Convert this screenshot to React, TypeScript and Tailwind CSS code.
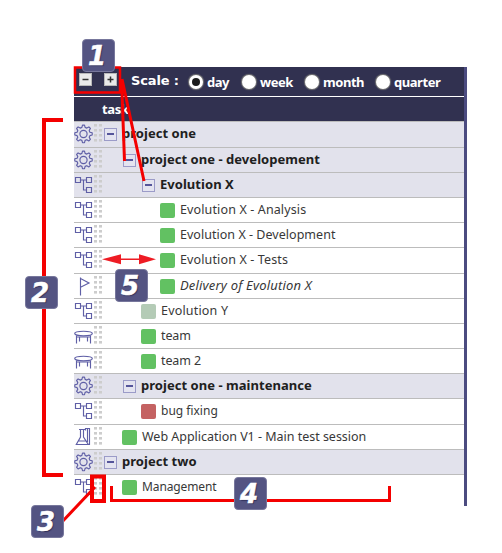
import React from "react";

type IconKind = "gear" | "tree" | "flag" | "table" | "flask";

type Row = {
  icon: IconKind;
  label: string;
  pad: string;
  tall?: boolean;
  group?: boolean;
  color?: string;
  text: string;
};

const groupText = "-mt-[2px] text-[13px] font-bold tracking-[0.04px] text-[#202020]";

const rows: Row[] = [
  { icon: "gear", label: "project one", pad: "pl-0", group: true, tall: true, text: groupText },
  { icon: "gear", label: "project one - developement", pad: "pl-[19px]", group: true, text: groupText },
  { icon: "tree", label: "Evolution X", pad: "pl-[38px]", group: true, text: groupText },
  { icon: "tree", label: "Evolution X - Analysis", pad: "pl-[57px]", color: "bg-[#62c162]", text: "text-[#383838] text-[12.5px] tracking-[0.13px]" },
  { icon: "tree", label: "Evolution X - Development", pad: "pl-[57px]", color: "bg-[#62c162]", text: "text-[#383838] text-[12.5px] tracking-[0.03px]" },
  { icon: "tree", label: "Evolution X - Tests", pad: "pl-[57px]", color: "bg-[#62c162]", tall: true, text: "text-[#383838] text-[12.5px] tracking-[0.13px]" },
  { icon: "flag", label: "Delivery of Evolution X", pad: "pl-[57px]", color: "bg-[#62c162]", text: "-mt-[2px] text-[#383838] text-[13px] italic tracking-[0.18px]" },
  { icon: "tree", label: "Evolution Y", pad: "pl-[38px]", color: "bg-[#b4cbb6]", text: "text-[#383838] text-[12.5px] tracking-[0.18px]" },
  { icon: "table", label: "team", pad: "pl-[38px]", color: "bg-[#62c162]", text: "text-[#383838] text-[12.5px] tracking-[-0.1px]" },
  { icon: "table", label: "team 2", pad: "pl-[38px]", color: "bg-[#62c162]", text: "text-[#383838] text-[12.5px] tracking-[-0.1px]" },
  { icon: "gear", label: "project one - maintenance", pad: "pl-[19px]", group: true, text: groupText },
  { icon: "tree", label: "bug fixing", pad: "pl-[38px]", color: "bg-[#c46262]", tall: true, text: "text-[#383838] text-[12px]" },
  { icon: "flask", label: "Web Application V1 - Main test session", pad: "pl-[19px]", color: "bg-[#62c162]", text: "text-[#383838] text-[12.5px] tracking-[-0.02px]" },
  { icon: "gear", label: "project two", pad: "pl-0", group: true, text: groupText },
  { icon: "tree", label: "Management", pad: "pl-[19px]", color: "bg-[#62c162]", text: "text-[#383838] text-[12px] tracking-[-0.12px]" },
];

function RowIcon({ kind }: { kind: IconKind }) {
  return (
    <svg className="-mt-[1px] size-5 shrink-0" viewBox="0 0 20 20" fill="none" stroke="#5f5fa6" strokeWidth="1.15">
      {kind === "gear" && (
        <g transform="translate(0 -0.5)">
          <circle cx="9.5" cy="10.500" r="3.6" />
          <path
            strokeLinejoin="round"
            d="M7.900 3.900 8.500 1.600h2l.600 2.300 1.700.7 2.100-1.200 1.500 1.500-1.200 2.100.7 1.700 2.300.6v2.200l-2.300.6-.7 1.700 1.200 2.100-1.500 1.500-2.100-1.200-1.700.7-.600 2.300h-2l-.600-2.300-1.700-.7-2.100 1.200L2.600 15.900l1.200-2.100-.7-1.700-2.300-.6V9.300l2.300-.6.7-1.700-1.200-2.100 1.500-1.500 2.100 1.200z"
          />
        </g>
      )}
      {kind === "tree" && <path d="M1.500 2.500h5v5h-5zM12.500 2.500h5v5h-5zM12.500 12.500h5v5h-5zM6.500 5h6M9.500 5v10h3" />}
      {kind === "flag" && <path d="M6.500 1.500v18M6.500 2.500l8.500 4.500-8.500 4.200" />}
      {kind === "table" && (
        <>
          <ellipse cx="9.500" cy="7.500" rx="8.800" ry="2.300" />
          <path d="M2.500 9.500v8M5.500 10.500v5M13.500 10.500v5M16.500 9.500v8M3 11h13" />
        </>
      )}
      {kind === "flask" && <path d="M5 2.500h6M6.500 3v7l-4.200 7.500h12L9.500 10V3M4.300 14h7.500M11.500 3.500V1.500h4v16h-2M13.500 2v13" />}
    </svg>
  );
}

function Grip() {
  return (
    <svg className="-mt-[2px] h-[18px] w-2 shrink-0" viewBox="0 0 8 18" fill="#cdcdcd">
      {[0, 5, 10, 15].map((y) => (
        <React.Fragment key={y}>
          <rect x="0" y={y} width="3" height="2.600" />
          <rect x="5" y={y} width="3" height="2.600" />
        </React.Fragment>
      ))}
    </svg>
  );
}

function TaskRow({ row, last }: { row: Row; last: boolean }) {
  return (
    <div
      className={`flex ${last ? "h-[31px] items-start" : row.tall ? "h-[26px] border-b border-[#bcbcbc]" : "h-[25px] border-b border-[#bcbcbc]"} ${row.group ? "bg-[#e2e2ec]" : "bg-white"}`}
    >
      <div className="flex h-[24px] items-center">
        <RowIcon kind={row.icon} />
        <Grip />
        <div className={`ml-[1px] flex h-[24px] items-center ${row.pad}`}>
          {row.group ? (
            <span className="ml-[1px] flex size-[13px] items-center justify-center border border-[#9b9bc8] bg-[#e4e4f0]">
              <span className="h-[1.500px] w-[7px] bg-[#55559a]" />
            </span>
          ) : (
            <span className={`mt-[1px] size-[15px] rounded-[2px] ${row.color}`} />
          )}
          <span className={`ml-[5px] leading-[24px] whitespace-nowrap ${row.text}`}>{row.label}</span>
        </div>
      </div>
    </div>
  );
}

function Radio({ label, checked, className }: { label: string; checked?: boolean; className: string }) {
  return (
    <div className={`flex items-center ${className}`}>
      <span className="flex size-[14px] shrink-0 items-center justify-center rounded-full bg-white shadow-[0_0_1px_1px_#777]">
        {checked && <span className="size-2 rounded-full bg-[#1b1b1b]" />}
      </span>
      <span className="ml-[4px] text-[13px] leading-4 font-bold tracking-[-0.45px]">{label}</span>
    </div>
  );
}

function Badge({ n, className }: { n: string; className: string }) {
  return (
    <div
      className={`absolute flex size-[33px] items-center justify-center rounded-[4px] border border-[#77779c] bg-[#545482] pr-[3px] text-[26px] leading-none font-bold text-white italic [-webkit-text-stroke:0.5px_white] [font-family:'DejaVu_Sans',sans-serif] [text-shadow:1px_1px_1px_#2e2e58] ${className}`}
    >
      {n}
    </div>
  );
}

export default function App() {
  return (
    <div className="relative h-[553px] w-[502px] overflow-hidden bg-white pt-[67px] pl-[74px] [font-family:'Noto_Sans',sans-serif]">
      <div className="w-[393px] border-r-[3px] border-[#4b4b80]">
        <div className="flex h-[29px] bg-[#313150] pl-[5px] text-white">
          <div className="flex items-start gap-[12px] pt-[6px]">
            {["-", "+"].map((sign) => (
              <span key={sign} className="flex size-[13px] items-center justify-center border border-[#b8b8b8] bg-[#e9e9e9]">
                <svg className="size-[7px]" viewBox="0 0 7 7" stroke="#333" strokeWidth="1.500">
                  <path d={sign === "+" ? "M0.500 3.500h6M3.500 0.500v6" : "M0.500 3.500h6"} />
                </svg>
              </span>
            ))}
          </div>
          <span className="mt-[6px] ml-[14px] w-[58px] text-[13px] leading-4 font-bold tracking-[-0.15px] whitespace-nowrap [font-family:'DejaVu_Sans',sans-serif]">
            Scale :
          </span>
          <Radio label="day" checked className="w-[53px]" />
          <Radio label="week" className="w-[63px]" />
          <Radio label="month" className="w-[71px]" />
          <Radio label="quarter" className="" />
        </div>
        <div className="h-[26px] border-t border-b border-t-white border-b-[#bcbcbc] bg-[#313150] pl-[28px] text-[13px] leading-[25px] font-bold tracking-[-0.4px] text-white">
          task
        </div>
        {rows.map((row, i) => (
          <TaskRow key={row.label} row={row} last={i === rows.length - 1} />
        ))}
      </div>
      <svg className="absolute inset-0" width="502" height="553" viewBox="0 0 502 553" fill="none" stroke="#f40000">
        <path d="M75 67.500H120V92.500H75z" strokeWidth="2.500" />
        <path d="M121.500 79L124.500 161M122 79L144 181" strokeWidth="3" />
        <path d="M63 120H44V475H63" strokeWidth="4" />
        <path d="M92 476.500h12v24.500H92z" strokeWidth="4" />
        <path d="M95 487L61 523" strokeWidth="3" />
        <path d="M111.500 486v14.500H389.500V486" strokeWidth="3" />
        <path d="M112 259.300h35" stroke="#ee1c24" strokeWidth="1.500" />
        <path d="M102 259.300l19-5v10zM156 259.300l-17-5v10z" fill="#ee1c24" stroke="none" />
      </svg>
      <Badge n="1" className="top-[39px] left-[82px]" />
      <Badge n="2" className="top-[276px] left-[25px]" />
      <Badge n="3" className="top-[505px] left-[31px]" />
      <Badge n="4" className="top-[477px] left-[234px]" />
      <Badge n="5" className="top-[269px] left-[115px]" />
    </div>
  );
}
